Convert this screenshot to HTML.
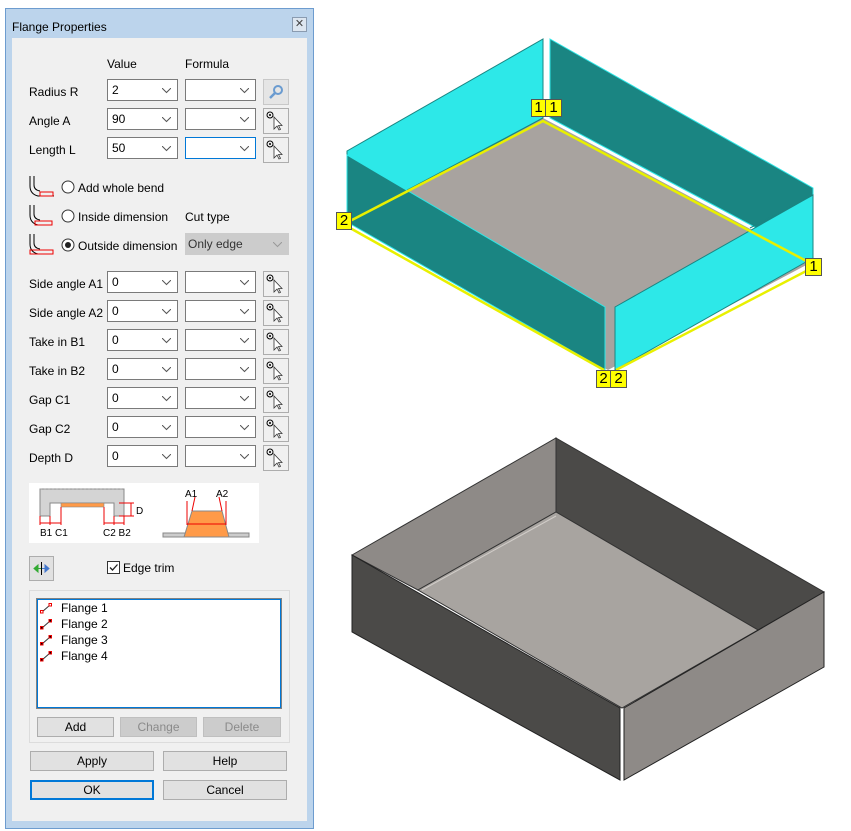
<!DOCTYPE html>
<html><head><meta charset="utf-8"><style>
*{box-sizing:border-box;margin:0;padding:0}
body{width:851px;height:831px;background:#fff;position:relative;overflow:hidden;font-family:"Liberation Sans",sans-serif;font-size:12px;color:#000}
.a{position:absolute}
.frame{left:5px;top:8px;width:309px;height:821px;background:#bcd4ec;border:1px solid #6d9ccf}
.panel{left:12px;top:38px;width:295px;height:783px;background:#f0f0f0}
.lbl{position:absolute;font-size:12px;white-space:nowrap}
.cb{position:absolute;height:22px;background:#fff;border:1px solid #7a7a7a;padding:3px 0 0 4px}
.cb svg{position:absolute;right:6px;top:8px}
.btn{position:absolute;background:#e1e1e1;border:1px solid #adadad;text-align:center;line-height:18px}
.pk{position:absolute;width:26px;height:26px;background:#f0f0f0;border:1px solid #adadad}
</style></head><body>

<svg class="a" style="left:0;top:0" width="851" height="831">
<!-- top box -->
<polygon points="347,151 543,39 543,118 347,222" fill="#2de8e8" stroke="#1a8582" stroke-width="1"/>
<polygon points="550,39 813,188 813,258 550,118" fill="#1a8582" stroke="#2de8e8" stroke-width="1"/>
<polygon points="543,118 812,262 608,370 350,222" fill="#a8a39f"/>
<polygon points="347,155 605,307 605,370 347,222" fill="#1a8582" stroke="#2de8e8" stroke-width="1"/>
<polygon points="615,307 813,195 813,258 615,370" fill="#2de8e8" stroke="#1a8582" stroke-width="1"/>
<line x1="410" y1="190" x2="543" y2="118" stroke="#1a8582" stroke-width="1"/>
<line x1="750" y1="228" x2="813" y2="195" stroke="#1a8582" stroke-width="1"/>
<polyline points="350,221 543,121 812,264" fill="none" stroke="#e8f000" stroke-width="2.5"/>
<line x1="350" y1="228" x2="604" y2="370" stroke="#e8f000" stroke-width="2.5"/>
<line x1="616" y1="370" x2="812" y2="268" stroke="#e8f000" stroke-width="2.5"/>
<!-- bottom box -->
<polygon points="352,555 556,438 556,512 418,590" fill="#8e8a87" stroke="#333" stroke-width="1"/>
<polygon points="556,438 824,592 758,630 556,512" fill="#4b4a48" stroke="#333" stroke-width="1"/>
<polygon points="556,512 758,630 622,708 418,590" fill="#a8a4a0" stroke="#333" stroke-width="1"/>
<polygon points="352,555 620,708 620,780 352,632" fill="#4b4a48" stroke="#222" stroke-width="1"/>
<polygon points="624,708 824,592 824,667 624,780" fill="#8e8a87" stroke="#222" stroke-width="1"/>
<line x1="422" y1="590" x2="556" y2="516" stroke="#d0ccc8" stroke-width="1"/>
</svg>
<div class="a" style="left:531px;top:99px;width:15px;height:18px;background:#ff0;border:1px solid #555;font-size:15px;line-height:16px;text-align:center">1</div>
<div class="a" style="left:545px;top:99px;width:17px;height:18px;background:#ff0;border:1px solid #555;font-size:15px;line-height:16px;text-align:center">1</div>
<div class="a" style="left:336px;top:212px;width:16px;height:18px;background:#ff0;border:1px solid #555;font-size:15px;line-height:16px;text-align:center">2</div>
<div class="a" style="left:805px;top:258px;width:17px;height:18px;background:#ff0;border:1px solid #555;font-size:15px;line-height:16px;text-align:center">1</div>
<div class="a" style="left:596px;top:370px;width:15px;height:18px;background:#ff0;border:1px solid #555;font-size:15px;line-height:16px;text-align:center">2</div>
<div class="a" style="left:610px;top:370px;width:17px;height:18px;background:#ff0;border:1px solid #555;font-size:15px;line-height:16px;text-align:center">2</div>

<div class="a frame"></div>
<div class="lbl" style="left:12px;top:20px">Flange Properties</div>
<div class="a" style="left:292px;top:17px;width:15px;height:15px;border:1px solid #8a9bb0;background:#dde6f0;font-size:11px;line-height:12px;text-align:center;color:#444">✕</div>
<div class="a panel"></div>

<div class="lbl" style="left:107px;top:57px">Value</div>
<div class="lbl" style="left:185px;top:57px">Formula</div>

<div class="lbl" style="left:29px;top:85px">Radius R</div>
<div class="lbl" style="left:29px;top:114px">Angle A</div>
<div class="lbl" style="left:29px;top:143px">Length L</div>
<div class="lbl" style="left:29px;top:277px">Side angle A1</div>
<div class="lbl" style="left:29px;top:306px">Side angle A2</div>
<div class="lbl" style="left:29px;top:335px">Take in B1</div>
<div class="lbl" style="left:29px;top:364px">Take in B2</div>
<div class="lbl" style="left:29px;top:393px">Gap C1</div>
<div class="lbl" style="left:29px;top:422px">Gap C2</div>
<div class="lbl" style="left:29px;top:451px">Depth D</div>

<!-- combos generated -->
<div class="cb" style="left:107px;top:79px;width:71px">2<svg width="9" height="6"><path d="M0 0 L4.5 4.5 L9 0" fill="none" stroke="#555"/></svg></div>
<div class="cb" style="left:185px;top:79px;width:71px"><svg width="9" height="6"><path d="M0 0 L4.5 4.5 L9 0" fill="none" stroke="#555"/></svg></div>
<div class="cb" style="left:107px;top:108px;width:71px">90<svg width="9" height="6"><path d="M0 0 L4.5 4.5 L9 0" fill="none" stroke="#555"/></svg></div>
<div class="cb" style="left:185px;top:108px;width:71px"><svg width="9" height="6"><path d="M0 0 L4.5 4.5 L9 0" fill="none" stroke="#555"/></svg></div>
<div class="cb" style="left:107px;top:137px;width:71px">50<svg width="9" height="6"><path d="M0 0 L4.5 4.5 L9 0" fill="none" stroke="#555"/></svg></div>
<div class="cb" style="left:185px;top:137px;width:71px;border-color:#0078d7"><svg width="9" height="6"><path d="M0 0 L4.5 4.5 L9 0" fill="none" stroke="#555"/></svg></div>

<div class="pk" style="left:263px;top:79px;background:#e5e5e5;border-color:#c8c8c8"><svg width="24" height="24"><circle cx="14" cy="10" r="4" fill="none" stroke="#6a9bd0" stroke-width="2"/><line x1="11" y1="13" x2="6" y2="18" stroke="#6a9bd0" stroke-width="2.5"/></svg></div>

<div class="a" style="left:0;top:0" id="rows"></div>

<!-- picker icon repeated -->
<svg width="0" height="0" style="position:absolute"><defs><g id="pick"><circle cx="6" cy="6" r="3" fill="none" stroke="#000"/><circle cx="6" cy="6" r="1" fill="#000"/><path d="M10 8 L10 20 L13 17 L15 21 L16.5 20.3 L14.5 16.5 L18 16.5 Z" fill="#fff" stroke="#333" stroke-width="0.8"/></g></defs></svg>
<div class="pk" style="left:263px;top:108px"><svg width="24" height="24"><use href="#pick"/></svg></div>
<div class="pk" style="left:263px;top:137px"><svg width="24" height="24"><use href="#pick"/></svg></div>

<!-- bend icons -->
<svg class="a" style="left:26px;top:174px" width="30" height="90">
<g fill="none" stroke="#000"><path d="M4 2 V12 Q4 20 12 22 H28"/><path d="M8 2 V11 Q8 16 14 17"/></g><rect x="14" y="18" width="13" height="4" fill="none" stroke="#e00"/>
<g transform="translate(0,29)" fill="none" stroke="#000"><path d="M4 2 V12 Q4 20 12 22"/><path d="M8 2 V11 Q8 16 14 17"/></g><rect x="9" y="47" width="17" height="4" fill="none" stroke="#e00"/>
<g transform="translate(0,58)" fill="none" stroke="#000"><path d="M4 2 V12 Q4 20 12 22"/><path d="M8 2 V11 Q8 16 14 17"/></g><rect x="4" y="76" width="23" height="4" fill="none" stroke="#e00"/>
</svg>
<svg class="a" style="left:61px;top:180px" width="14" height="72">
<circle cx="7" cy="7" r="6" fill="#fff" stroke="#333"/><circle cx="7" cy="36" r="6" fill="#fff" stroke="#333"/><circle cx="7" cy="65" r="6" fill="#fff" stroke="#333"/><circle cx="7" cy="65" r="3" fill="#222"/>
</svg>
<div class="lbl" style="left:78px;top:181px">Add whole bend</div>
<div class="lbl" style="left:78px;top:210px">Inside dimension</div>
<div class="lbl" style="left:78px;top:239px">Outside dimension</div>
<div class="lbl" style="left:185px;top:210px">Cut type</div>
<div class="a" style="left:185px;top:233px;width:104px;height:22px;background:#ccc;border:1px solid #ccc;padding:3px 0 0 2px;color:#333">Only edge<svg style="position:absolute;right:6px;top:8px" width="9" height="6"><path d="M0 0 L4.5 4.5 L9 0" fill="none" stroke="#999"/></svg></div>

<!-- lower rows -->
<div class="cb" style="left:107px;top:271px;width:71px">0<svg width="9" height="6"><path d="M0 0 L4.5 4.5 L9 0" fill="none" stroke="#555"/></svg></div>
<div class="cb" style="left:185px;top:271px;width:71px"><svg width="9" height="6"><path d="M0 0 L4.5 4.5 L9 0" fill="none" stroke="#555"/></svg></div>
<div class="pk" style="left:263px;top:271px"><svg width="24" height="24"><use href="#pick"/></svg></div>
<div class="cb" style="left:107px;top:300px;width:71px">0<svg width="9" height="6"><path d="M0 0 L4.5 4.5 L9 0" fill="none" stroke="#555"/></svg></div>
<div class="cb" style="left:185px;top:300px;width:71px"><svg width="9" height="6"><path d="M0 0 L4.5 4.5 L9 0" fill="none" stroke="#555"/></svg></div>
<div class="pk" style="left:263px;top:300px"><svg width="24" height="24"><use href="#pick"/></svg></div>
<div class="cb" style="left:107px;top:329px;width:71px">0<svg width="9" height="6"><path d="M0 0 L4.5 4.5 L9 0" fill="none" stroke="#555"/></svg></div>
<div class="cb" style="left:185px;top:329px;width:71px"><svg width="9" height="6"><path d="M0 0 L4.5 4.5 L9 0" fill="none" stroke="#555"/></svg></div>
<div class="pk" style="left:263px;top:329px"><svg width="24" height="24"><use href="#pick"/></svg></div>
<div class="cb" style="left:107px;top:358px;width:71px">0<svg width="9" height="6"><path d="M0 0 L4.5 4.5 L9 0" fill="none" stroke="#555"/></svg></div>
<div class="cb" style="left:185px;top:358px;width:71px"><svg width="9" height="6"><path d="M0 0 L4.5 4.5 L9 0" fill="none" stroke="#555"/></svg></div>
<div class="pk" style="left:263px;top:358px"><svg width="24" height="24"><use href="#pick"/></svg></div>
<div class="cb" style="left:107px;top:387px;width:71px">0<svg width="9" height="6"><path d="M0 0 L4.5 4.5 L9 0" fill="none" stroke="#555"/></svg></div>
<div class="cb" style="left:185px;top:387px;width:71px"><svg width="9" height="6"><path d="M0 0 L4.5 4.5 L9 0" fill="none" stroke="#555"/></svg></div>
<div class="pk" style="left:263px;top:387px"><svg width="24" height="24"><use href="#pick"/></svg></div>
<div class="cb" style="left:107px;top:416px;width:71px">0<svg width="9" height="6"><path d="M0 0 L4.5 4.5 L9 0" fill="none" stroke="#555"/></svg></div>
<div class="cb" style="left:185px;top:416px;width:71px"><svg width="9" height="6"><path d="M0 0 L4.5 4.5 L9 0" fill="none" stroke="#555"/></svg></div>
<div class="pk" style="left:263px;top:416px"><svg width="24" height="24"><use href="#pick"/></svg></div>
<div class="cb" style="left:107px;top:445px;width:71px">0<svg width="9" height="6"><path d="M0 0 L4.5 4.5 L9 0" fill="none" stroke="#555"/></svg></div>
<div class="cb" style="left:185px;top:445px;width:71px"><svg width="9" height="6"><path d="M0 0 L4.5 4.5 L9 0" fill="none" stroke="#555"/></svg></div>
<div class="pk" style="left:263px;top:445px"><svg width="24" height="24"><use href="#pick"/></svg></div>

<!-- diagram -->
<svg class="a" style="left:29px;top:483px;background:#fff" width="230" height="60">
<path d="M11 33 V6 H95 V33 H85 V20 H21 V33 Z" fill="#d4d4d4" stroke="#888"/>
<path d="M11 6 H95" stroke="#999" stroke-dasharray="2 2"/>
<rect x="32" y="20" width="43" height="4" fill="#ff9a48" stroke="#888" stroke-width="0.6"/>
<g stroke="#e00" stroke-width="1" fill="none"><path d="M11 33 V42 M21 33 V42 M32 24 V42 M75 24 V42 M85 33 V42 M95 33 V42 M11 40 H32 M75 40 H95 M90 20 H105 M90 33 H105 M102 20 V33"/></g>
<text x="11" y="53" font-size="10" font-family="Liberation Sans">B1 C1</text>
<text x="74" y="53" font-size="10" font-family="Liberation Sans">C2 B2</text>
<text x="107" y="31" font-size="10" font-family="Liberation Sans">D</text>
<rect x="134" y="50" width="86" height="4" fill="#ccc" stroke="#888"/>
<polygon points="163,28 193,28 200,54 155,54" fill="#ff9a48" stroke="#888"/>
<g stroke="#e00" fill="none"><path d="M158 18 V42 M197 18 V42 M158 41 H197 M163 28 L166 14 M193 28 L190 14"/></g>
<text x="156" y="14" font-size="10" font-family="Liberation Sans">A1</text>
<text x="187" y="14" font-size="10" font-family="Liberation Sans">A2</text>
</svg>

<div class="a" style="left:29px;top:556px;width:25px;height:25px;background:#e1e1e1;border:1px solid #adadad"><svg width="23" height="23"><line x1="11.5" y1="5" x2="11.5" y2="18" stroke="#000"/><path d="M4 11.5 L8 8 V15 Z M8 11.5 H11" fill="#3a3" stroke="#3a3"/><path d="M19 11.5 L15 8 V15 Z M12 11.5 H15" fill="#47c" stroke="#47c"/></svg></div>
<div class="a" style="left:107px;top:561px;width:13px;height:13px;background:#fff;border:1px solid #333"><svg width="11" height="11"><path d="M2 5.5 L4.5 8 L9.5 2.5" fill="none" stroke="#222" stroke-width="1.3"/></svg></div>
<div class="lbl" style="left:123px;top:561px">Edge trim</div>

<div class="a" style="left:29px;top:590px;width:261px;height:153px;border:1px solid #dcdcdc"></div>
<div class="a" style="left:36px;top:598px;width:246px;height:111px;background:#fff;border:1px solid #828282;box-shadow:inset 0 0 0 1px #0078d7"></div>
<svg class="a" style="left:39px;top:601px" width="16" height="64">
<g stroke="#000" fill="#fff"><g id="fl"><line x1="3" y1="11" x2="11" y2="4" stroke="#333"/><rect x="1.5" y="9.5" width="2.5" height="2.5" stroke="#e00"/><rect x="10" y="2.5" width="2.5" height="2.5" stroke="#e00"/></g></g>
<use href="#fl" y="16"/><use href="#fl" y="32"/><use href="#fl" y="48"/>
</svg>
<div class="lbl" style="left:61px;top:600px;line-height:16px">Flange 1<br>Flange 2<br>Flange 3<br>Flange 4</div>

<div class="btn" style="left:37px;top:717px;width:77px;height:20px">Add</div>
<div class="btn" style="left:120px;top:717px;width:77px;height:20px;background:#ccc;border-color:#bfbfbf;color:#8a8a8a">Change</div>
<div class="btn" style="left:203px;top:717px;width:78px;height:20px;background:#ccc;border-color:#bfbfbf;color:#8a8a8a">Delete</div>
<div class="btn" style="left:30px;top:751px;width:124px;height:20px">Apply</div>
<div class="btn" style="left:163px;top:751px;width:124px;height:20px">Help</div>
<div class="btn" style="left:30px;top:780px;width:124px;height:20px;border:2px solid #0078d7;line-height:16px">OK</div>
<div class="btn" style="left:163px;top:780px;width:124px;height:20px">Cancel</div>
</body></html>
